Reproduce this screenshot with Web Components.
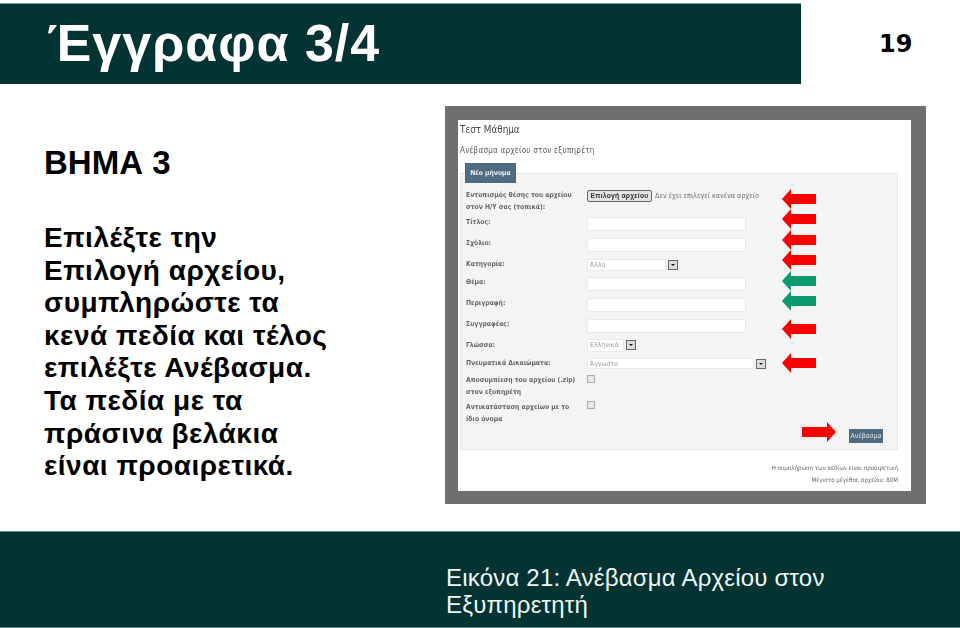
<!DOCTYPE html>
<html lang="el">
<head>
<meta charset="utf-8">
<title>Έγγραφα 3/4</title>
<style>
  html, body { margin: 0; background: #fff; }
  body { width: 960px; height: 628px; overflow: hidden; font-family: "Liberation Sans", Arial, sans-serif; }
</style>
</head>
<body>
<slide-page>
  <slide-header slot="header" page="19">Έγγραφα 3/4</slide-header>
  <step-text slot="left" heading="ΒΗΜΑ 3">Επιλέξτε την<br>Επιλογή αρχείου,<br>συμπληρώστε τα<br>κενά πεδία και τέλος<br>επιλέξτε Ανέβασμα.<br>Τα πεδία με τα<br>πράσινα βελάκια<br>είναι προαιρετικά.</step-text>
  <upload-shot slot="right"></upload-shot>
  <slide-footer slot="footer">Εικόνα 21: Ανέβασμα Αρχείου στον<br>Εξυπηρετητή</slide-footer>
</slide-page>

<script>
// helper, every element just sets its html in the shadow root
class Base extends HTMLElement {
  connectedCallback() {
    if (this.shadowRoot) return;
    this.attachShadow({mode: 'open'});
    this.shadowRoot.innerHTML = this.render();
  }
}

customElements.define('slide-page', class extends Base {
  render() { return `
    <style>
      :host { display: flex; flex-direction: column; width: 960px; height: 628px; }
      .main { display: flex; height: 447px; }
      .left { width: 445px; flex: none; }
    </style>
    <slot name="header"></slot>
    <div class="main">
      <div class="left"><slot name="left"></slot></div>
      <slot name="right"></slot>
    </div>
    <slot name="footer"></slot>`; }
});

customElements.define('slide-header', class extends Base {
  render() { return `
    <style>
      :host { display: flex; align-items: center; margin-top: 3px; height: 81px; }
      .bar { width: 801px; height: 81px; box-sizing: border-box; border-top: 1px solid #7f9c9c;
        background: #033333; color: #fff; display: flex; align-items: center; padding: 0 0 3px 47px; }
      .title { font-size: 52px; font-weight: bold; line-height: 1; letter-spacing: 1px; white-space: nowrap; }
      .num { margin-left: 78px; font: bold 24px "DejaVu Sans", sans-serif; color: #000; }
    </style>
    <div class="bar"><span class="title"><slot></slot></span></div>
    <span class="num">${this.getAttribute('page')}</span>`; }
});

customElements.define('step-text', class extends Base {
  render() { return `
    <style>
      :host { display: block; padding: 60px 0 0 44px; color: #000; }
      h2 { margin: 0 0 40px; font-size: 33px; line-height: 38px; font-weight: bold; }
      p { margin: 0; font-size: 28px; font-weight: bold; line-height: 32.6px; letter-spacing: .5px; white-space: nowrap; }
    </style>
    <h2>${this.getAttribute('heading')}</h2>
    <p><slot></slot></p>`; }
});

customElements.define('slide-footer', class extends Base {
  render() { return `
    <style>
      :host { display: block; box-sizing: border-box; height: 97px; background: #033333; color: #f2f6f6;
        border-top: 1px solid #5f8585; border-bottom: 1px solid #5f8585; padding: 32px 0 0 446px; font-size: 24px; line-height: 27px; letter-spacing: .2px; }
    </style>
    <slot></slot>`; }
});

customElements.define('shot-arrow', class extends Base {
  render() {
    const c = this.getAttribute('color') == 'green' ? '#0a9a6e' : '#fb0000';
    const right = this.hasAttribute('right');
    const pts = right ? '0,5 25,5 25,0 34,10 25,20 25,15 0,15' : '0,10 9,0 9,5 34,5 34,15 9,15 9,20';
    return `
    <style>
      :host { position: absolute; left: ${this.getAttribute('x')}px; top: ${this.getAttribute('y')}px; width: 34px; height: 20px; line-height: 0; }
    </style>
    <svg width="34" height="20" viewBox="0 0 34 20"><polygon points="${pts}" fill="${c}"/></svg>`; }
});

customElements.define('form-row', class extends Base {
  render() { return `
    <style>
      :host { display: grid; grid-template-columns: 121px 1fr; height: ${this.getAttribute('h')}px; padding-left: 5px;
        font: bold 6.75px/12px "DejaVu Sans Condensed", "DejaVu Sans", sans-serif; color: #666; }
      .label { padding-top: ${this.getAttribute('lt') || 0}px; white-space: nowrap; }
      .field { padding-top: ${this.getAttribute('ft') || 0}px; display: flex; align-items: flex-start; gap: 2px; }
    </style>
    <div class="label">${this.getAttribute('label')}</div>
    <div class="field"><slot></slot></div>`; }
});

customElements.define('text-box', class extends Base {
  render() { return `
    <style>
      :host { display: block; box-sizing: border-box; width: ${this.getAttribute('w') || 159}px; height: ${this.getAttribute('h') || 14}px;
        background: #fff; border: 1px solid #e9e9e9; border-radius: 2px;
        font: 6.9px/11px "DejaVu Sans Condensed", "DejaVu Sans", sans-serif; color: #9a9a9a; padding-left: 2px; white-space: nowrap; }
    </style>
    <slot></slot>`; }
});

customElements.define('drop-arrow', class extends Base {
  render() { return `
    <style>
      :host { display: block; width: 10px; height: 10px; box-sizing: border-box; margin-top: 1px; background: #dcdcdc; border: 1px solid #666;
        position: relative; }
      i { position: absolute; left: 2px; top: 3px; border: 2px solid transparent; border-top: 2.5px solid #111; border-bottom: 0; }
    </style>
    <i></i>`; }
});

customElements.define('upload-shot', class extends Base {
  render() { return `
    <style>
      :host { display: block; box-sizing: border-box; align-self: flex-start; margin-top: 22px; width: 481px; height: 398px;
        background: #6f6f6f; padding: 14px 15px 13px 13px; }
      .page { position: relative; height: 100%; background: #fff; overflow: hidden; font-family: "DejaVu Sans Condensed", "DejaVu Sans", sans-serif; }
      .blur { filter: blur(.45px); height: 100%; padding: 4px 0 0 2px; box-sizing: border-box; }
      .t1 { font-size: 9.8px; line-height: 12px; color: #4a4a4a; }
      .t2 { font-size: 8px; line-height: 10px; margin-top: 10px; color: #5c5c5c; letter-spacing: .25px; }
      .box { width: 438px; height: 277px; margin-top: 17px; box-sizing: border-box; background: #f4f4f4; border: 1px solid #e8e8e8; }
      .tab { display: block; margin: -11px 0 0 4px; width: 51px; height: 20px; background: #4f6b82; color: #e8eef2;
        font: bold 6.75px/20px "DejaVu Sans Condensed", "DejaVu Sans", sans-serif; text-align: center; }
      .rows { margin-top: 6px; }
      .btn { box-sizing: border-box; height: 12px; margin-top: 1px; width: 65px; text-align: center; border: 1px solid #666; border-radius: 2px; background: #e4e4e4;
        font: bold 6.8px/10px "Liberation Sans", sans-serif; letter-spacing: .2px; color: #333; white-space: nowrap; }
      .none { font-size: 7.2px; font-weight: normal; line-height: 13px; color: #6e6e6e; white-space: nowrap; margin-left: 1px; }
      .check { width: 8px; height: 8px; box-sizing: border-box; border: 1px solid #aaa; background: #e6e6e6; margin-top: 1px; }
      .send { display: block; margin: 4px 0 0 388px; width: 34px; height: 14px; background: #4f6b82; color: #dfe7ec; font-size: 6.9px; line-height: 14px; text-align: center; }
      .notes { margin-top: 12px; width: 438px; text-align: right; font-size: 6.15px; line-height: 12px; color: #666; white-space: nowrap; }
    </style>
    <div class="page">
      <div class="blur">
        <div class="t1">Τεστ Μάθημα</div>
        <div class="t2">Ανέβασμα αρχείου στον εξυπηρέτη</div>
        <div class="box">
          <span class="tab">Νέο μήνυμα</span>
          <div class="rows">
            <form-row h="26" label="Εντοπισμός θέσης του αρχείου<br>στον Η/Υ σας (τοπικά):"><span class="btn">Επιλογή αρχείου</span><span class="none">Δεν έχει επιλεγεί κανένα αρχείο</span></form-row>
            <form-row h="21" ft="2" lt="1" label="Τίτλος:"><text-box></text-box></form-row>
            <form-row h="21" ft="2" lt="1" label="Σχόλιο:"><text-box></text-box></form-row>
            <form-row h="18" ft="2" lt="1" label="Κατηγορία:"><text-box w="79" h="12">Άλλο</text-box><drop-arrow></drop-arrow></form-row>
            <form-row h="21" ft="2" lt="1" label="Θέμα:"><text-box></text-box></form-row>
            <form-row h="21" ft="2" lt="1" label="Περιγραφή:"><text-box></text-box></form-row>
            <form-row h="20" ft="2" lt="1" label="Συγγραφέας:"><text-box></text-box></form-row>
            <form-row h="19" ft="2" lt="2" label="Γλώσσα:"><text-box w="37" h="13">Ελληνικά</text-box><drop-arrow></drop-arrow></form-row>
            <form-row h="17" ft="2" lt="1" label="Πνευματικά Δικαιώματα:"><text-box w="167" h="11">Άγνωστο</text-box><drop-arrow></drop-arrow></form-row>
            <form-row h="26" ft="1" lt="1" label="Αποσυμπίεση του αρχείου (.zip)<br>στον εξυπηρέτη"><span class="check"></span></form-row>
            <form-row h="26" ft="1" lt="2" label="Αντικατάσταση αρχείων με το<br>ίδιο όνομα"><span class="check"></span></form-row>
          </div>
          <span class="send">Ανέβασμα</span>
        </div>
        <div class="notes">Η συμπλήρωση των πεδίων είναι προαιρετική<br>Μέγιστο μέγεθος αρχείου: 80Μ</div>
      </div>
      <shot-arrow x="324" y="69"></shot-arrow>
      <shot-arrow x="324" y="89"></shot-arrow>
      <shot-arrow x="324" y="110"></shot-arrow>
      <shot-arrow x="324" y="130"></shot-arrow>
      <shot-arrow x="324" y="151" color="green"></shot-arrow>
      <shot-arrow x="324" y="171" color="green"></shot-arrow>
      <shot-arrow x="324" y="199"></shot-arrow>
      <shot-arrow x="324" y="233"></shot-arrow>
      <shot-arrow x="344" y="302" right></shot-arrow>
    </div>`; }
});
</script>
</body>
</html>
